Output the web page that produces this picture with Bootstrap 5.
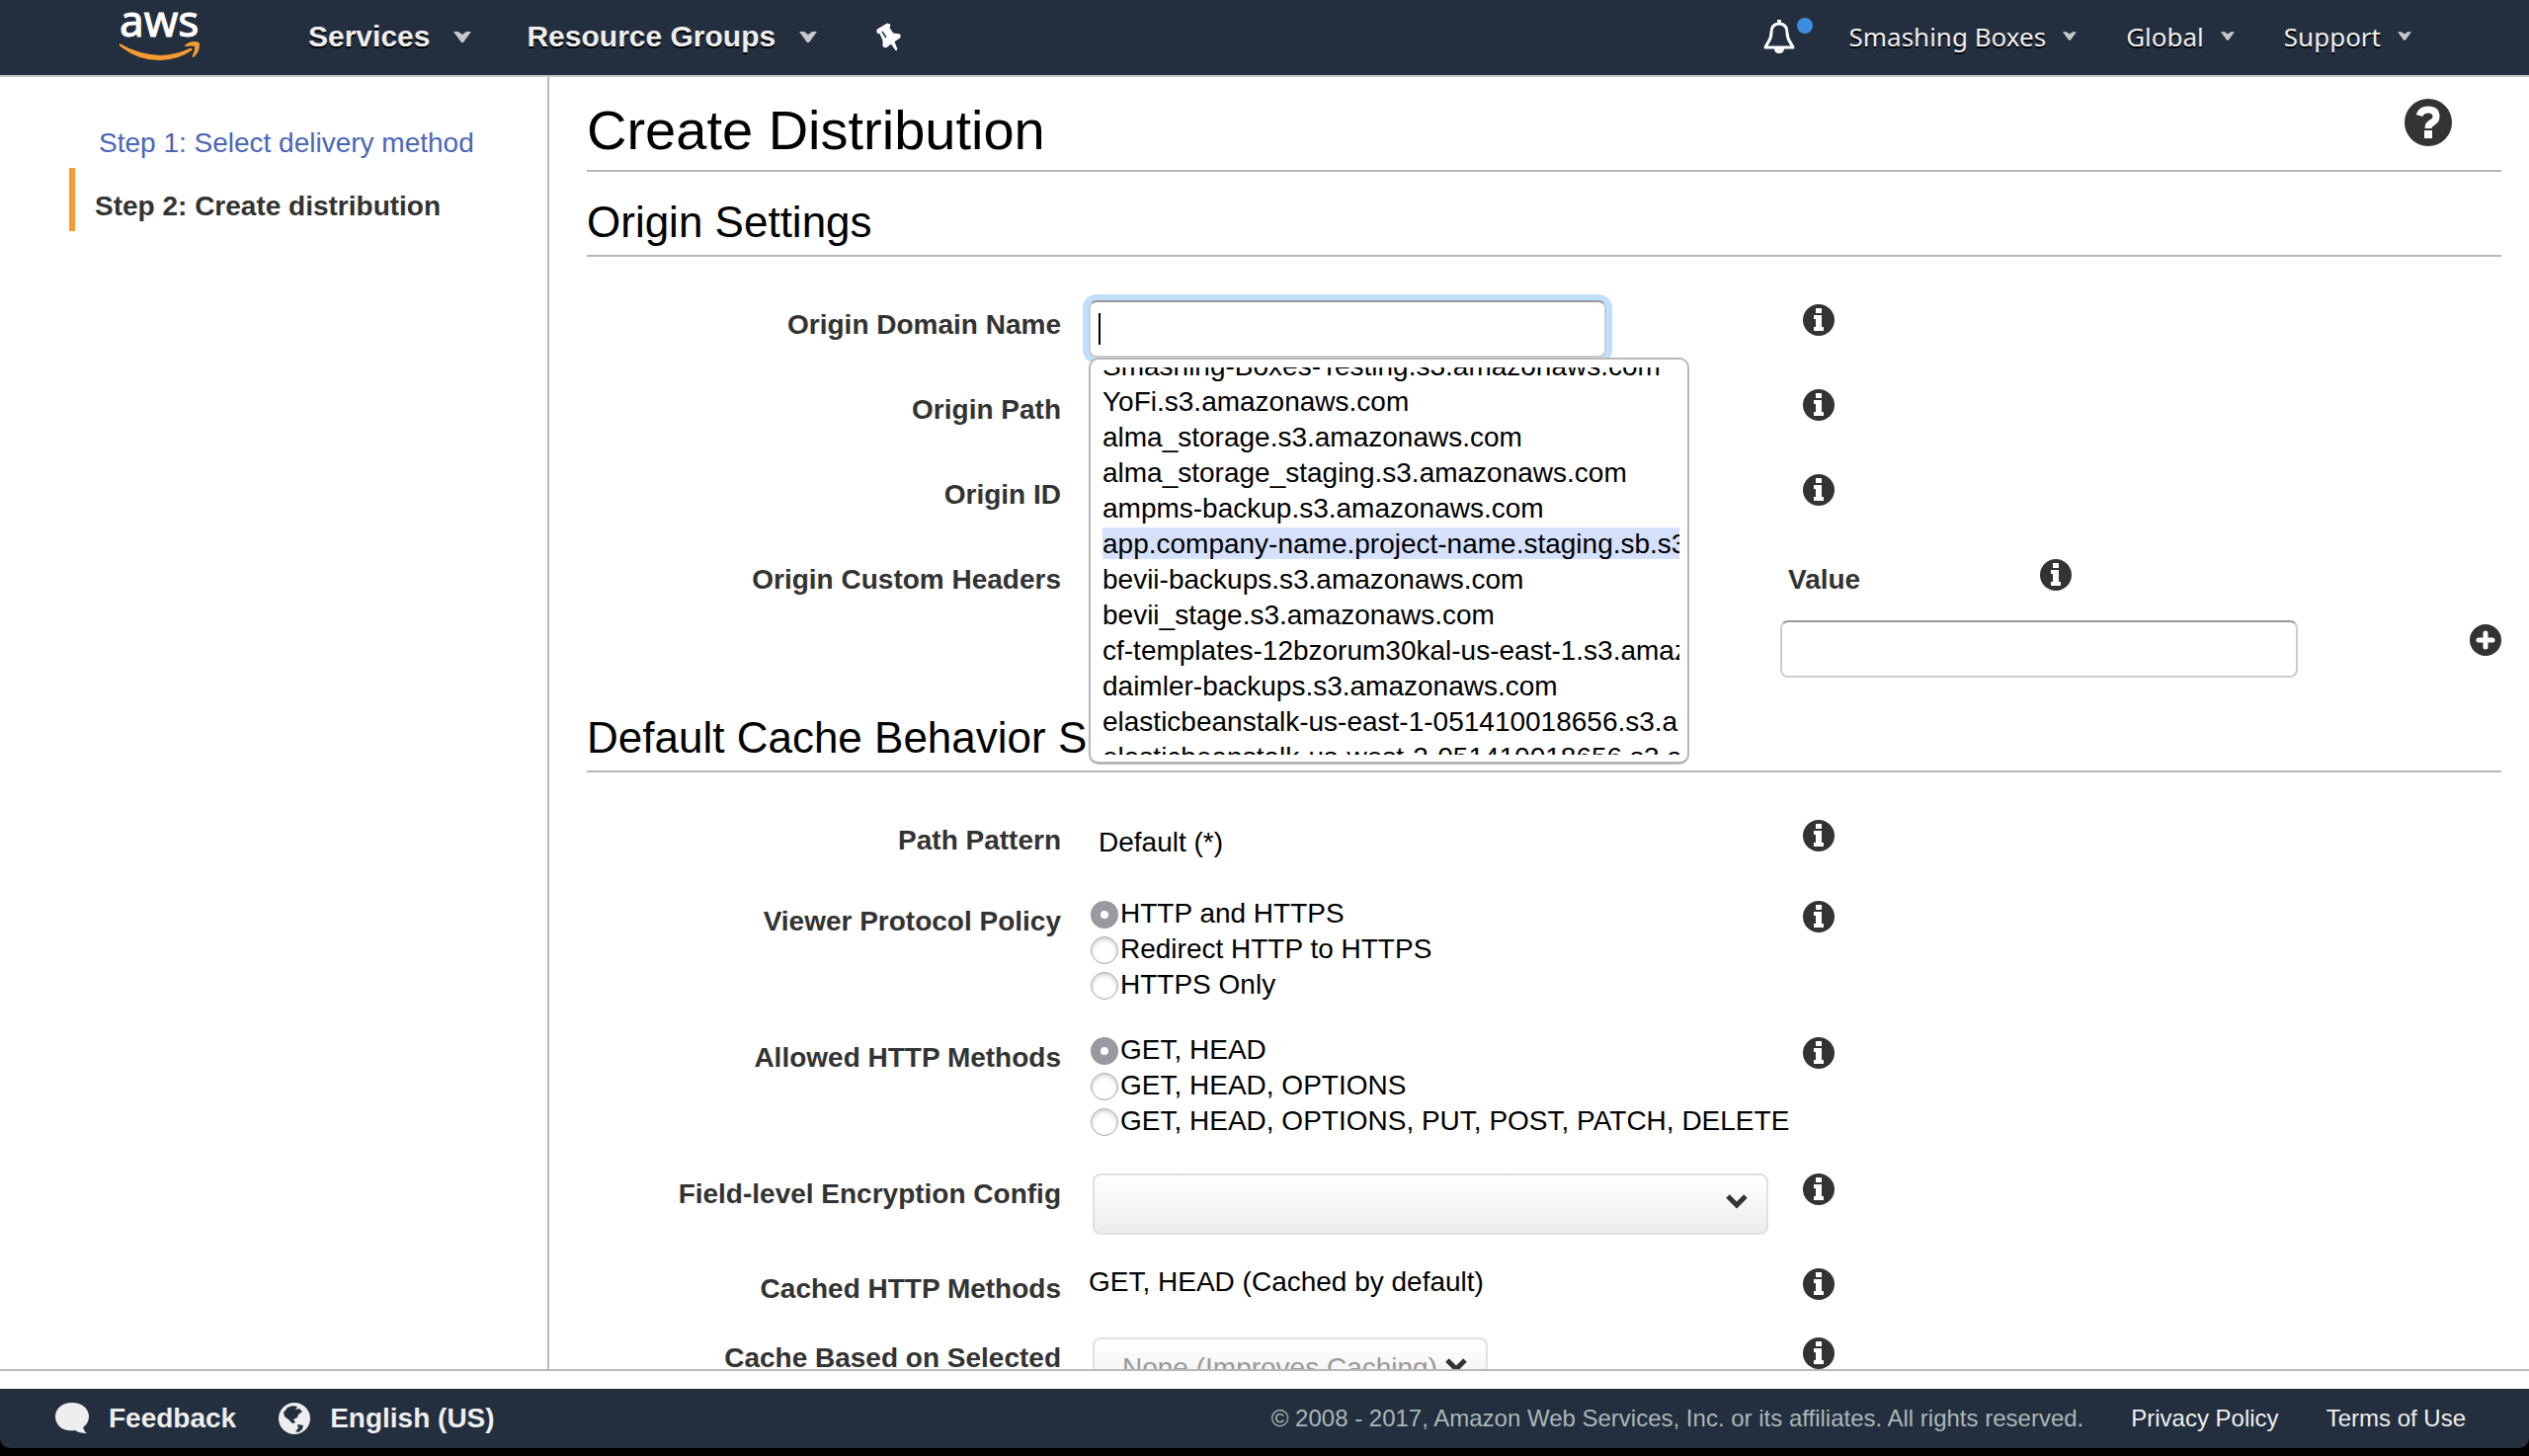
<!DOCTYPE html>
<html lang="en">
<head>
<meta charset="utf-8">
<meta name="viewport" content="width=device-width, initial-scale=1">
<title>Create Distribution</title>
<link href="https://cdn.jsdelivr.net/npm/bootstrap@5.3.0/dist/css/bootstrap.min.css" rel="stylesheet">
<style>
  html, body { height: 100%; }
  body { font-family: "Liberation Sans", Arial, sans-serif; font-size: 28px; line-height: 36px; color: #000; background: #000; overflow: hidden; }
  .console { height: 100vh; padding-bottom: 8px; }

  /* top bar */
  .topbar { height: 78px; background: #232f3e; border-bottom: 2px solid #c6c8cc; padding-bottom: 2px; }
  .topbar button { background: none; border: 0; padding: 0; color: #eee; text-shadow: 0 2px 0 #000; line-height: 36px; }
  .nav-strong { font-weight: 700; font-size: 30px; gap: 24px; }
  .nav-plain { font-family: "Noto Sans", sans-serif; font-size: 26px; gap: 17px; }
  .logo-link { margin-left: 120px; margin-right: 108px; line-height: 0; }
  .logo-link svg { overflow: visible; }
  .logo-word { font-family: "Noto Sans", sans-serif; font-size: 44px; }
  .groups-gap { gap: 56px; }
  .account-gap { gap: 50px; margin-right: 119px; }
  .bell { margin-right: -16px; width: 52px; }
  .alert-dot { position: absolute; left: 34px; top: 0; width: 16px; height: 16px; border-radius: 50%; background: #3b8ede; }

  /* step list */
  .workspace { background: #fff; border-bottom: 2px solid #b8b8b8; min-height: 0; overflow: hidden; }
  .steps { width: 556px; border-right: 2px solid #b8b8b8; padding: 28px 0 0 70px; }
  .steps a { display: block; height: 64px; padding-top: 21px; text-decoration: none; color: #4b65b8; padding-left: 30px; }
  .steps a.current { font-weight: 700; color: #333; border-left: 6px solid #ff9a2e; padding-left: 20px; }

  /* form */
  .pane { min-width: 0; padding: 0 28px 0 38px; }
  .pane h1 { font-size: 56px; line-height: 64px; font-weight: 400; margin: 0; }
  .title-row { height: 96px; padding: 22px 50px 0 0; border-bottom: 2px solid #b8b8b8; }
  .pane h2 { font-size: 44px; line-height: 52px; font-weight: 400; margin: 0; border-bottom: 2px solid #b8b8b8; padding: 25px 0 7px; }
  .field-rows { padding-top: 44px; }
  .field-row { display: flex; align-items: flex-start; }
  .field-name { width: 480px; text-align: right; font-weight: 700; color: #333; margin-right: 28px; padding-top: 7px; flex: none; }
  .field-body { width: 723px; flex: none; position: relative; }
  .icon-btn { background: none; border: 0; padding: 0; display: block; line-height: 0; flex: none; }
  .info-btn { margin-top: 4px; }
  .box { border: 2px solid #ccc; border-top-color: #999; border-radius: 8px; height: 58px; width: 524px; padding: 0 8px; background: #fff; display: block; outline: 0; font-size: 28px; }
  .box-focus { box-shadow: 0 0 0 6px #bfdffd; }
  .box-caret { position: absolute; left: 10px; top: 13px; width: 2px; height: 32px; background: #000; }
  .suggest { position: absolute; z-index: 5; left: 0; top: 58px; width: 608px; height: 412px; border: 2px solid #b8b8b8; border-bottom-width: 3px; border-radius: 10px; background: #fff; padding: 8px 8px 8px 12px; }
  .suggest ul { height: 392px; overflow: hidden; margin: 0; padding: 0; list-style: none; }
  .suggest li { white-space: nowrap; overflow: hidden; height: 36px; }
  .suggest li:first-child { margin-top: -19px; }
  .suggest .chosen { background: linear-gradient(#d5e1fd, #d5e1fd) 0 1px / 100% 32px no-repeat; }
  .row-sm { height: 70px; }
  .row-path { height: 82px; }
  .row-md { height: 86px; }
  .row-select { height: 96px; }
  .row-headers { height: 134px; }
  .row-choices { height: 138px; }
  .value-col { margin-left: 700px; width: 702px; margin-right: 4px; }
  .value-head { height: 66px; padding: 0 0 0 8px; gap: 182px; }
  .value-head label { font-weight: 700; color: #333; padding-top: 7px; }
  .add-btn { margin-top: 70px; }
  .plain-value { padding: 9px 0 0 10px; }
  .choice { height: 36px; display: flex; align-items: center; gap: 2px; }
  .choice label { padding-bottom: 2px; }
  .choice input { appearance: none; width: 28px; height: 28px; margin: 0 0 0 2px; border-radius: 50%; border: 1px solid #aaa; background: #fff; box-shadow: inset 0 2px 4px #ccc; flex: none; }
  .choice input:checked { border: 10px solid #99999e; box-shadow: none; }
  .picker-wrap { position: relative; margin: 4px 0 0 4px; }
  .picker { appearance: none; display: block; width: 100%; border: 2px solid #e1e1e1; border-radius: 8px; height: 62px; background: linear-gradient(#fff, #ededed); color: #999; opacity: 1; font-size: 28px; padding: 0 28px; }
  .picker-wide { width: 684px; }
  .picker-short { width: 400px; }
  .pick-arrow { position: absolute; pointer-events: none; right: 21px; top: 21px; }

  /* footer */
  .gutter { height: 18px; }
  .footbar { height: 60px; background: #232f3e; border-radius: 0 0 10px 10px; padding: 0 64px 0 56px; font-size: 24px; gap: 48px; }
  .footbar a { color: #eee; text-decoration: none; }
  .foot-strong { font-size: 28px; font-weight: 700; gap: 20px; }
  .foot-left { gap: 43px; }
  .legal { color: #aab7b8; }
</style>
</head>
<body>
<svg class="d-none" aria-hidden="true">
  <symbol id="caret" viewBox="0 0 18 11"><path d="M0 0H5L9 3L13 0H18L10 11H8Z" fill="#c8c8c8"/></symbol>
  <symbol id="info" viewBox="0 0 32 32"><circle cx="16" cy="16" r="16" fill="#333"/><path d="M13 4h6v5h-6zM11 11h8v12h2v4H11v-4h2v-8h-2z" fill="#fff"/></symbol>
  <symbol id="chevron" viewBox="0 0 22 15"><path d="M2 2L11 11L20 2" fill="none" stroke="#333" stroke-width="5"/></symbol>
</svg>
<div class="console d-flex flex-column">
  <header class="topbar d-flex align-items-center flex-shrink-0">
    <a class="logo-link" href="#" aria-label="AWS home">
      <svg width="84" height="52" viewBox="0 0 84 52"><text class="logo-word" x="1" y="26" fill="#fff" stroke="#fff">aws</text><path d="M1 33Q0 35 3 37Q22 51 43 50Q62 49 74 40Q76 37 72 38Q57 45 42 45Q20 44 1 33Z" fill="#f79a32"/><path d="M67 35Q71 31 77 31Q82 31 82 34Q82 42 76 47Q74 47 75 45Q78 38 77 36Q75 35 68 36Q66 36 67 35Z" fill="#f79a32"/></svg>
    </a>
    <div class="d-flex groups-gap">
      <button class="nav-strong d-flex align-items-center" type="button">Services <svg width="18" height="11"><use href="#caret"/></svg></button>
      <button class="nav-strong d-flex align-items-center" type="button">Resource Groups <svg width="18" height="11"><use href="#caret"/></svg></button>
      <button class="d-flex align-items-center ms-1" type="button" aria-label="Pin shortcuts"><svg width="25" height="29" viewBox="0 0 25 29"><path d="M1 7L11 1L14 2L13 5L17 11L24 12V15L18 19L21 27L20 28L15 21L10 25L7 24V18L4 11L1 10Z" fill="#fff" stroke="#fff" stroke-linejoin="round"/><path d="M6 9L10 15" stroke="#232f3e" stroke-width="1.5"/></svg></button>
    </div>
    <div class="d-flex ms-auto account-gap align-items-center">
      <button class="bell position-relative text-start" type="button" aria-label="Notifications"><svg width="32" height="36" viewBox="0 0 32 36"><path d="M16 4C10 4 8 8 8 13C8 21 4 23 2 28H30C28 23 24 21 24 13C24 8 22 4 16 4Z" fill="none" stroke="#fff" stroke-width="3" stroke-linejoin="round"/><path d="M14 0h4v4h-4zM11 29h10q0 5-5 5t-5-5" fill="#fff"/></svg><span class="alert-dot"></span></button>
      <button class="nav-plain d-flex align-items-center" type="button">Smashing Boxes <svg width="14" height="9"><use href="#caret"/></svg></button>
      <button class="nav-plain d-flex align-items-center" type="button">Global <svg width="14" height="9"><use href="#caret"/></svg></button>
      <button class="nav-plain d-flex align-items-center" type="button">Support <svg width="14" height="9"><use href="#caret"/></svg></button>
    </div>
  </header>

  <div class="workspace d-flex flex-grow-1">
    <nav class="steps flex-shrink-0">
      <a href="#">Step 1: Select delivery method</a>
      <a href="#" class="current" aria-current="step">Step 2: Create distribution</a>
    </nav>
    <main class="pane flex-grow-1">
      <div class="title-row d-flex justify-content-between">
        <h1>Create Distribution</h1>
        <button class="icon-btn align-self-start" type="button" aria-label="Help"><svg width="48" height="48" viewBox="0 0 48 48"><circle cx="24" cy="24" r="24" fill="#333"/><path d="M15 17Q17 11 24 11Q32 11 32 18Q32 22 28 24Q24 26 24 30" fill="none" stroke="#fff" stroke-width="7"/><path d="M20 32h8v8h-8z" fill="#fff"/></svg></button>
      </div>

      <h2>Origin Settings</h2>
      <div class="field-rows">
        <div class="field-row row-md">
          <label class="field-name" for="domain">Origin Domain Name</label>
          <div class="field-body">
            <input class="box box-focus" id="domain" type="text"><span class="box-caret"></span>
            <div class="suggest">
              <ul>
                <li>Smashing-Boxes-Testing.s3.amazonaws.com</li>
                <li>YoFi.s3.amazonaws.com</li>
                <li>alma_storage.s3.amazonaws.com</li>
                <li>alma_storage_staging.s3.amazonaws.com</li>
                <li>ampms-backup.s3.amazonaws.com</li>
                <li class="chosen">app.company-name.project-name.staging.sb.s3.amazonaws.com</li>
                <li>bevii-backups.s3.amazonaws.com</li>
                <li>bevii_stage.s3.amazonaws.com</li>
                <li>cf-templates-12bzorum30kal-us-east-1.s3.amazonaws.com</li>
                <li>daimler-backups.s3.amazonaws.com</li>
                <li>elasticbeanstalk-us-east-1-051410018656.s3.amazonaws.com</li>
                <li>elasticbeanstalk-us-west-2-051410018656.s3.amazonaws.com</li>
              </ul>
            </div>
          </div>
          <button class="icon-btn info-btn" type="button" aria-label="About origin domain name"><svg width="32" height="32"><use href="#info"/></svg></button>
        </div>
        <div class="field-row row-md"><div class="field-name">Origin Path</div><div class="field-body"></div><button class="icon-btn info-btn" type="button" aria-label="About origin path"><svg width="32" height="32"><use href="#info"/></svg></button></div>
        <div class="field-row row-md"><div class="field-name">Origin ID</div><div class="field-body"></div><button class="icon-btn info-btn" type="button" aria-label="About origin ID"><svg width="32" height="32"><use href="#info"/></svg></button></div>
        <div class="field-row row-headers">
          <div class="field-name">Origin Custom Headers</div>
          <div class="value-col">
            <div class="value-head d-flex align-items-start">
              <label for="header-value">Value</label>
              <button class="icon-btn info-btn" type="button" aria-label="About header value"><svg width="32" height="32"><use href="#info"/></svg></button>
            </div>
            <input class="box" id="header-value" type="text">
          </div>
          <button class="icon-btn add-btn" type="button" aria-label="Add header"><svg width="32" height="32" viewBox="0 0 32 32"><circle cx="16" cy="16" r="16" fill="#333"/><path d="M16 9V23M9 16H23" stroke="#fff" stroke-width="5" stroke-linecap="round"/></svg></button>
        </div>
      </div>

      <h2>Default Cache Behavior Settings</h2>
      <div class="field-rows">
        <div class="field-row row-path">
          <div class="field-name">Path Pattern</div>
          <div class="field-body plain-value">Default (*)</div>
          <button class="icon-btn info-btn" type="button" aria-label="About path pattern"><svg width="32" height="32"><use href="#info"/></svg></button>
        </div>
        <div class="field-row row-choices" role="radiogroup" aria-labelledby="viewer-name">
          <div class="field-name" id="viewer-name">Viewer Protocol Policy</div>
          <div class="field-body">
            <div class="choice"><input type="radio" name="viewer" id="v1" checked><label for="v1">HTTP and HTTPS</label></div>
            <div class="choice"><input type="radio" name="viewer" id="v2"><label for="v2">Redirect HTTP to HTTPS</label></div>
            <div class="choice"><input type="radio" name="viewer" id="v3"><label for="v3">HTTPS Only</label></div>
          </div>
          <button class="icon-btn info-btn" type="button" aria-label="About viewer protocol policy"><svg width="32" height="32"><use href="#info"/></svg></button>
        </div>
        <div class="field-row row-choices" role="radiogroup" aria-labelledby="methods-name">
          <div class="field-name" id="methods-name">Allowed HTTP Methods</div>
          <div class="field-body">
            <div class="choice"><input type="radio" name="methods" id="m1" checked><label for="m1">GET, HEAD</label></div>
            <div class="choice"><input type="radio" name="methods" id="m2"><label for="m2">GET, HEAD, OPTIONS</label></div>
            <div class="choice"><input type="radio" name="methods" id="m3"><label for="m3">GET, HEAD, OPTIONS, PUT, POST, PATCH, DELETE</label></div>
          </div>
          <button class="icon-btn info-btn" type="button" aria-label="About allowed HTTP methods"><svg width="32" height="32"><use href="#info"/></svg></button>
        </div>
        <div class="field-row row-select">
          <label class="field-name" for="encryption">Field-level Encryption Config</label>
          <div class="field-body"><div class="picker-wrap picker-wide"><select class="picker" id="encryption"><option></option></select><svg class="pick-arrow" width="22" height="15"><use href="#chevron"/></svg></div></div>
          <button class="icon-btn info-btn" type="button" aria-label="About field-level encryption"><svg width="32" height="32"><use href="#info"/></svg></button>
        </div>
        <div class="field-row row-sm">
          <div class="field-name">Cached HTTP Methods</div>
          <div class="field-body">GET, HEAD (Cached by default)</div>
          <button class="icon-btn info-btn" type="button" aria-label="About cached HTTP methods"><svg width="32" height="32"><use href="#info"/></svg></button>
        </div>
        <div class="field-row row-sm">
          <label class="field-name" for="cache-based">Cache Based on Selected</label>
          <div class="field-body"><div class="picker-wrap picker-short"><select class="picker" id="cache-based" disabled><option>None (Improves Caching)</option></select><svg class="pick-arrow" width="22" height="15"><use href="#chevron"/></svg></div></div>
          <button class="icon-btn info-btn" type="button" aria-label="About cache headers"><svg width="32" height="32"><use href="#info"/></svg></button>
        </div>
      </div>
    </main>
  </div>

  <div class="gutter bg-white flex-shrink-0"></div>
  <footer class="footbar d-flex align-items-center flex-shrink-0">
    <div class="foot-left d-flex me-auto">
      <a class="foot-strong d-flex align-items-center" href="#"><svg width="34" height="33" viewBox="0 0 34 33"><path d="M17 0C27 0 34 6 34 14C34 19 31 23 28 25Q29 29 32 31Q24 31 20 28C8 30 0 23 0 14C0 6 7 0 17 0Z" fill="#eee"/></svg>Feedback</a>
      <a class="foot-strong d-flex align-items-center" href="#"><svg width="32" height="32" viewBox="0 0 32 32"><circle cx="16" cy="16" r="16" fill="#eee"/><path d="M9 5Q14 2 19 4L17 7L21 6L24 9L20 12L19 15L15 17L17 20L14 21L10 17L6 14L5 10Z" fill="#232f3e"/><path d="M19 22L25 23L24 27L20 30L17 29L20 26Z" fill="#232f3e"/></svg>English (US)</a>
    </div>
    <span class="legal">© 2008 - 2017, Amazon Web Services, Inc. or its affiliates. All rights reserved.</span>
    <a href="#">Privacy Policy</a>
    <a href="#">Terms of Use</a>
  </footer>
</div>
<script src="https://cdn.jsdelivr.net/npm/bootstrap@5.3.0/dist/js/bootstrap.bundle.min.js"></script>
</body>
</html>
